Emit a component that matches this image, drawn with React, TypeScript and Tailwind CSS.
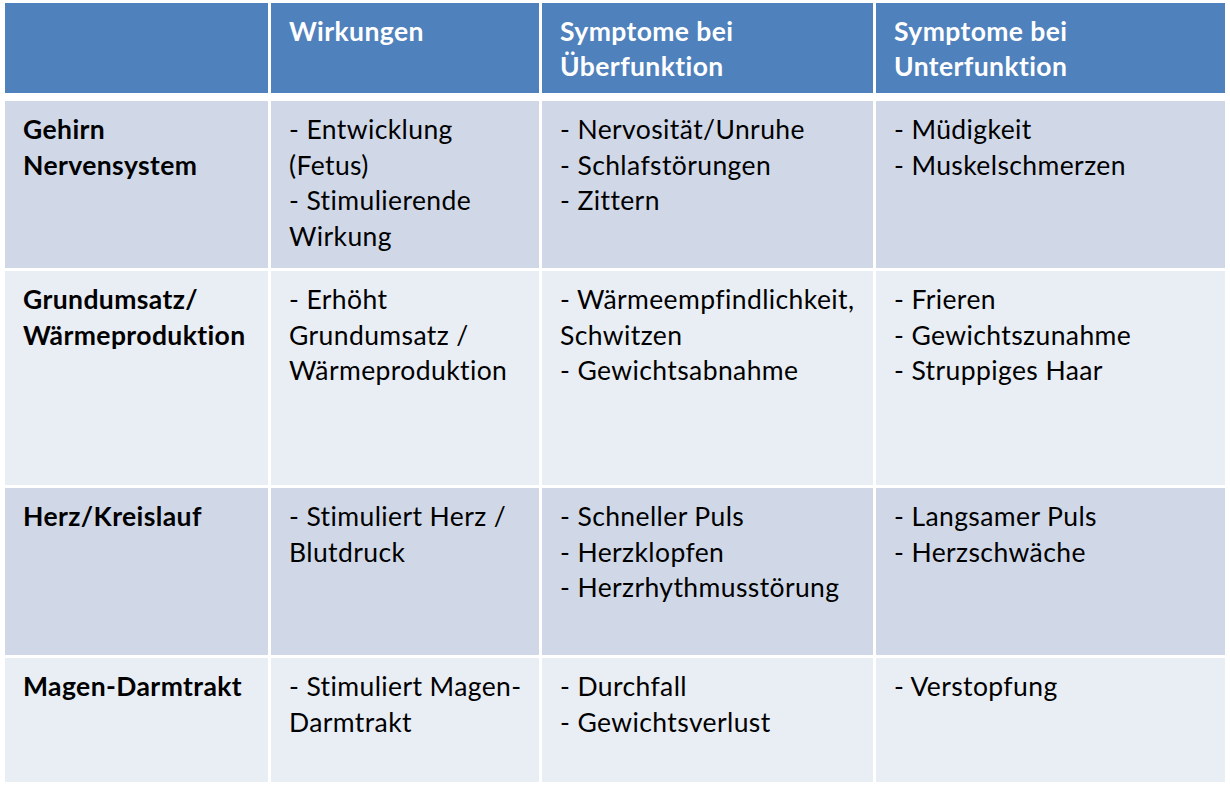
const rows = [
  {
    label: ['Gehirn', 'Nervensystem'],
    wirkung: ['- Entwicklung', '(Fetus)', '- Stimulierende', 'Wirkung'],
    ueber: ['- Nervosität/Unruhe', '- Schlafstörungen', '- Zittern'],
    unter: ['- Müdigkeit', '- Muskelschmerzen'],
    h: 'h-[167px]',
    bg: 'bg-[#d0d8e8]',
  },
  {
    label: ['Grundumsatz/', 'Wärmeproduktion'],
    wirkung: ['- Erhöht', 'Grundumsatz /', 'Wärmeproduktion'],
    ueber: ['- Wärmeempfindlichkeit,', 'Schwitzen', '- Gewichtsabnahme'],
    unter: ['- Frieren', '- Gewichtszunahme', '- Struppiges Haar'],
    h: 'h-[214px]',
    bg: 'bg-[#e9edf4]',
  },
  {
    label: ['Herz/Kreislauf'],
    wirkung: ['- Stimuliert Herz /', 'Blutdruck'],
    ueber: ['- Schneller Puls', '- Herzklopfen', '- Herzrhythmusstörung'],
    unter: ['- Langsamer Puls', '- Herzschwäche'],
    h: 'h-[167px]',
    bg: 'bg-[#d0d8e8]',
  },
  {
    label: ['Magen-Darmtrakt'],
    wirkung: ['- Stimuliert Magen-', 'Darmtrakt'],
    ueber: ['- Durchfall', '- Gewichtsverlust'],
    unter: ['- Verstopfung'],
    h: 'h-[124px]',
    bg: 'bg-[#e9edf4]',
  },
]

function Lines({ lines }: { lines: string[] }) {
  return (
    <>
      {lines.map((l, i) => (
        <div key={i} className="whitespace-nowrap">{l}</div>
      ))}
    </>
  )
}

export default function App() {
  const cols = 'grid grid-cols-[263px_268px_331px_349px] gap-x-[3px]'
  return (
    <div
      className="w-[1230px] h-[790px] bg-white pl-[5px] pt-[3px] text-[26.5px] leading-[35.6px] tracking-[0.4px]"
      style={{ fontFamily: 'Lato, "Open Sans", sans-serif' }}
    >
      {/* header */}
      <div className={`${cols} h-[90px] font-bold text-white`}>
        {['', 'Wirkungen', 'Symptome bei|Überfunktion', 'Symptome bei|Unterfunktion'].map((t, i) => (
          <div key={i} className="bg-[#4f81bd] pl-[18px] pt-[11px] leading-[35px]">
            <Lines lines={t ? t.split('|') : []} />
          </div>
        ))}
      </div>

      <div className="mt-[8px] flex flex-col gap-y-[3px] text-black">
        {rows.map((r, i) => (
          <div key={i} className={`${cols} ${r.h}`}>
            <div className={`${r.bg} pl-[18px] pt-[11px] font-bold`}>
              <Lines lines={r.label} />
            </div>
            <div className={`${r.bg} pl-[18px] pt-[11px]`}>
              <Lines lines={r.wirkung} />
            </div>
            <div className={`${r.bg} pl-[18px] pt-[11px]`}>
              <Lines lines={r.ueber} />
            </div>
            <div className={`${r.bg} pl-[18px] pt-[11px]`}>
              <Lines lines={r.unter} />
            </div>
          </div>
        ))}
      </div>
    </div>
  )
}
